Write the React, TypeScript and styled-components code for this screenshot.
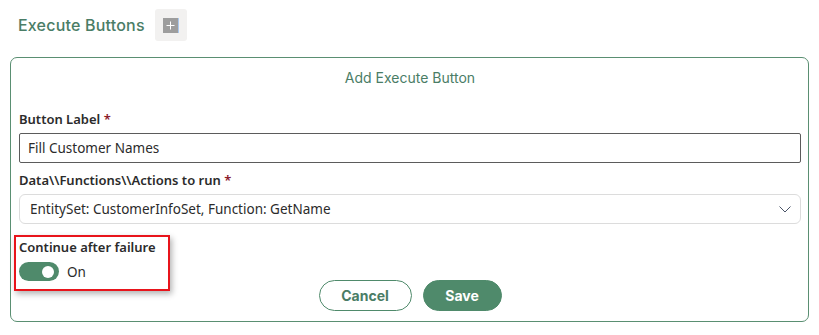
import styled, { createGlobalStyle } from 'styled-components';

const GlobalStyle = createGlobalStyle`
  body {
    margin: 0;
    background: #ffffff;
    font-family: 'Noto Sans', 'Open Sans', sans-serif;
    color: #2b2b2b;
  }
`;

const Page = styled.div`
  width: 819px;
  height: 335px;
  overflow: hidden;
`;

const HeaderRow = styled.div`
  display: flex;
  align-items: center;
  gap: 10px;
  height: 32px;
  padding: 9px 0 0 18px;
`;

const Heading = styled.h2`
  margin: 0;
  font-family: Inter, 'Noto Sans', sans-serif;
  font-size: 16px;
  font-weight: 500;
  letter-spacing: 0.2px;
  color: #4a7d66;
`;

const AddButton = styled.button`
  width: 32px;
  height: 32px;
  padding: 0;
  border: none;
  border-radius: 3px;
  background: #f2f1f0;
  display: flex;
  align-items: center;
  justify-content: center;
  cursor: pointer;
`;

const Card = styled.section`
  margin: 16px 10px 0;
  border: 1px solid #5a8f72;
  border-radius: 7px;
  padding: 10px 7px 8px 8px;
  height: 265px;
  box-sizing: border-box;
`;

const CardTitle = styled.div`
  text-align: center;
  font-family: Inter, 'Noto Sans', sans-serif;
  font-size: 14px;
  line-height: 20px;
  color: #4a7d66;
  margin-bottom: 22px;
`;

const Field = styled.div<{ $mb?: number }>`
  display: flex;
  flex-direction: column;
  gap: 5px;
  margin-bottom: ${(p) => p.$mb ?? 8}px;
`;

const Label = styled.label`
  font-size: 13px;
  font-weight: 600;
  line-height: 18px;
  color: #2b2b2b;
`;

const Required = styled.span`
  color: #8b1a2b;
`;

const TextInput = styled.input`
  height: 30px;
  box-sizing: border-box;
  border: 1px solid #5b5b5b;
  border-radius: 2px;
  padding: 0 8px;
  font-family: inherit;
  font-size: 13.5px;
  color: #2b2b2b;
  outline: none;
`;

const Select = styled.div`
  height: 30px;
  box-sizing: border-box;
  border: 1px solid #dcdcdc;
  border-radius: 6px;
  padding: 0 9px 0 10px;
  display: flex;
  align-items: center;
  justify-content: space-between;
  font-size: 13.5px;
  color: #2b2b2b;
`;

const ToggleSection = styled.div`
  position: relative;
  display: flex;
  flex-direction: column;
  gap: 6px;
  padding-top: 3px;
`;

const Highlight = styled.div`
  position: absolute;
  left: -5px;
  top: 0;
  width: 156px;
  height: 56px;
  box-sizing: border-box;
  border: 2px solid #e8141b;
  box-shadow: 2px 3px 6px rgba(0, 0, 0, 0.3);
  pointer-events: none;
`;

const ToggleRow = styled.div`
  display: flex;
  align-items: center;
  gap: 8px;
  font-size: 13.5px;
  color: #2b2b2b;
`;

const Switch = styled.span`
  width: 40px;
  height: 19px;
  border-radius: 10px;
  background: #4f8a6b;
  display: flex;
  align-items: center;
  justify-content: flex-end;
  padding-right: 5px;
  box-sizing: border-box;
`;

const Knob = styled.span`
  width: 12px;
  height: 12px;
  border-radius: 50%;
  background: #ffffff;
`;

const Actions = styled.div`
  display: flex;
  justify-content: center;
  gap: 11px;
  margin-top: -1px;
`;

const PillButton = styled.button<{ $primary?: boolean }>`
  height: 31px;
  padding: 0;
  width: ${(p) => (p.$primary ? 79 : 93)}px;
  border-radius: 16px;
  border: 1px solid #4f8a6b;
  background: ${(p) => (p.$primary ? '#4f8a6b' : '#ffffff')};
  color: ${(p) => (p.$primary ? '#ffffff' : '#4a7d66')};
  font-family: Inter, 'Noto Sans', sans-serif;
  font-size: 14px;
  font-weight: 700;
  cursor: pointer;
`;

export default function App() {
  return (
    <Page>
      <GlobalStyle />
      <HeaderRow>
        <Heading>Execute Buttons</Heading>
        <AddButton aria-label="Add">
          <svg width="16" height="15" viewBox="0 0 16 15">
            <rect x="0" y="0" width="15" height="15" fill="#9d9d9d" />
            <rect x="15" y="0" width="1" height="15" fill="#a9c8ee" />
            <path d="M7.5 3.5v8M3.5 7.5h8" stroke="#ffffff" strokeWidth="1" />
          </svg>
        </AddButton>
      </HeaderRow>
      <Card>
        <CardTitle>Add Execute Button</CardTitle>
        <Field>
          <Label>
            Button Label <Required>*</Required>
          </Label>
          <TextInput defaultValue="Fill Customer Names" />
        </Field>
        <Field $mb={11}>
          <Label>
            Data\\Functions\\Actions to run <Required>*</Required>
          </Label>
          <Select>
            <span>EntitySet: CustomerInfoSet, Function: GetName</span>
            <svg width="12" height="7" viewBox="0 0 12 7">
              <path d="M0.5 0.5l5.5 5.5 5.5-5.5" fill="none" stroke="#4a5468" strokeWidth="1" />
            </svg>
          </Select>
        </Field>
        <ToggleSection>
          <Label>Continue after failure</Label>
          <ToggleRow>
            <Switch>
              <Knob />
            </Switch>
            On
          </ToggleRow>
          <Highlight />
        </ToggleSection>
        <Actions>
          <PillButton>Cancel</PillButton>
          <PillButton $primary>Save</PillButton>
        </Actions>
      </Card>
    </Page>
  );
}
